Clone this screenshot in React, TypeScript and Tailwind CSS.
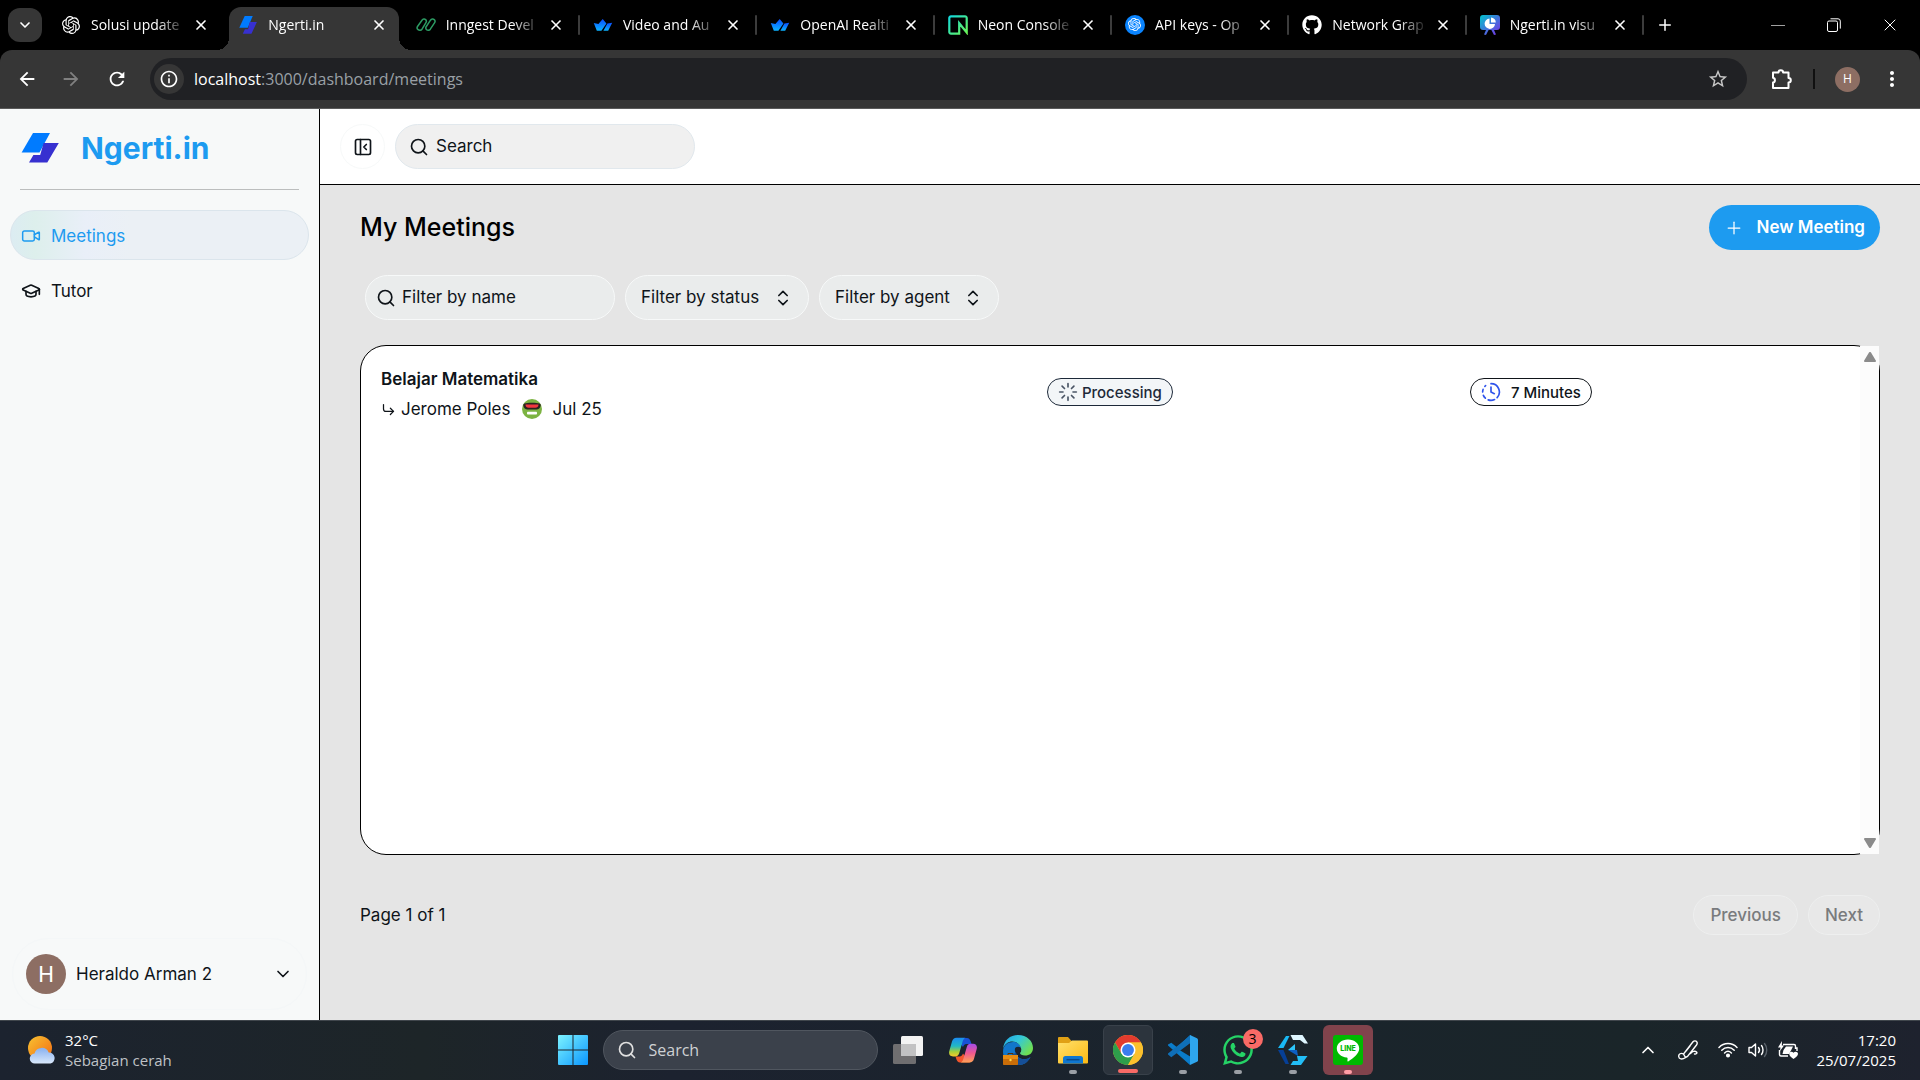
import type { ReactNode } from "react";
import {
  ChevronDown,
  ChevronUp,
  ChevronsUpDown,
  ClockFading,
  CornerDownRight,
  GraduationCap,
  Loader,
  PanelLeftClose,
  Plus,
  Search,
  Video,
  X,
} from "lucide-react";
import { FaGithub, FaWhatsapp } from "react-icons/fa";
import { MdArrowBack, MdArrowForward, MdInfoOutline, MdMoreVert, MdRefresh, MdStarBorder } from "react-icons/md";
import { SiOpenai } from "react-icons/si";

function Logo({ className }: { className?: string }) {
  return (
    <svg viewBox="0 0 38 30" preserveAspectRatio="none" className={className} aria-hidden="true">
      <path d="M12 0h17L18.5 19.5H.6z" fill="#007bff" />
      <path d="M22.6 10h15.2L26.3 29.4H8l4.4-7.4h6.8z" fill="#3730d0" />
    </svg>
  );
}

function InngestIcon() {
  return (
    <svg viewBox="0 0 20 16" className="h-4 w-5" fill="none" stroke="#2c9b63" strokeWidth="1.5" strokeLinecap="round" strokeLinejoin="round" aria-hidden="true">
      <path d="M1.5 9.5 6 3.2c1-1.4 2.6-1.5 3.6-.6s1 2.1.2 3.2L6 12.2c-1 1.3-2.8 1.4-3.9.5S.7 10.7 1.5 9.5z" />
      <path d="m10.3 9.5 4.2-6.3c1-1.4 2.7-1.5 3.7-.6s1.1 2.1.3 3.2l-4.2 6.4c-.9 1.3-2.7 1.4-3.7.5s-1.1-2-.3-3.2z" />
    </svg>
  );
}

function StreamIcon() {
  return (
    <svg viewBox="0 0 20 13" className="h-3 w-5" aria-hidden="true">
      <defs>
        <linearGradient id="stream" x1="0" x2="0" y1="0" y2="1">
          <stop stopColor="#0b4dff" />
          <stop offset="1" stopColor="#0bb4ff" />
        </linearGradient>
      </defs>
      <path d="M0 4.2 5 5.5 9.7 0l4 5-5.4 7.8h-5z" fill="url(#stream)" />
      <path d="m14.8 5 5.2-.9-4.4 8.7h-5.2z" fill="url(#stream)" />
    </svg>
  );
}

function NeonIcon() {
  return (
    <svg viewBox="0 0 20 20" className="size-5" aria-hidden="true">
      <defs>
        <linearGradient id="neon" x1="0" x2="1" y1="0" y2="1">
          <stop stopColor="#12d8dc" />
          <stop offset="1" stopColor="#6cf556" />
        </linearGradient>
      </defs>
      <path d="M9 18.7H3A1.7 1.7 0 0 1 1.300 17V3A1.700 1.700 0 0 1 3 1.300h14A1.700 1.700 0 0 1 18.700 3v14.500l-7.500-9.300v10.500z" fill="none" stroke="url(#neon)" strokeWidth="2.2" />
    </svg>
  );
}

function ApiIcon() {
  return (
    <span className="flex size-5 items-center justify-center rounded-full bg-[#0a84ff] text-white">
      <SiOpenai size={13} />
    </span>
  );
}

function BoardIcon() {
  return (
    <svg viewBox="0 0 20 20" className="size-5" aria-hidden="true">
      <defs>
        <linearGradient id="board" x1="0" x2="1" y1="0" y2="1">
          <stop stopColor="#00c4cc" />
          <stop offset="1" stopColor="#7d2ae8" />
        </linearGradient>
      </defs>
      <path d="M3 0h14a3 3 0 0 1 3 3v9a3 3 0 0 1-3 3h-3l2 4.500-2 .5-2.600-5H8.600L6 20l-2-.5L6 15H3a3 3 0 0 1-3-3V3a3 3 0 0 1 3-3z" fill="url(#board)" />
      <path d="M9.500 3.500V9H15a5.200 5.200 0 1 1-5.500-5.500z" fill="#fff" />
      <path d="M11 2.500A5 5 0 0 1 15.800 7.500H11z" fill="#fff" />
    </svg>
  );
}

type Tab = { title: string; icon: ReactNode; active?: boolean; divider?: boolean };

const tabs: Tab[] = [
  { title: "Solusi update", icon: <SiOpenai size={18} /> },
  { title: "Ngerti.in", icon: <Logo className="size-[18px]" />, active: true },
  { title: "Inngest Devel", icon: <InngestIcon />, divider: true },
  { title: "Video and Au", icon: <StreamIcon />, divider: true },
  { title: "OpenAI Realti", icon: <StreamIcon />, divider: true },
  { title: "Neon Console", icon: <NeonIcon />, divider: true },
  { title: "API keys - Op", icon: <ApiIcon />, divider: true },
  { title: "Network Grap", icon: <FaGithub size={20} />, divider: true },
  { title: "Ngerti.in visu", icon: <BoardIcon />, divider: true },
];

function BrowserTab({ tab }: { tab: Tab }) {
  return (
    <div className="relative flex h-[43px] min-w-0 flex-1 items-center">
      {tab.active && (
        <div className="absolute inset-y-0 right-1 left-1 rounded-t-xl bg-[#363636]">
          <span className="absolute bottom-0 -left-3 size-3 bg-[radial-gradient(circle_at_0_0,transparent_12px,#363636_12px)]" />
          <span className="absolute -right-3 bottom-0 size-3 bg-[radial-gradient(circle_at_100%_0,transparent_12px,#363636_12px)]" />
        </div>
      )}
      <div className="relative flex min-w-0 flex-1 items-center justify-between pr-4 pb-2 pl-[11px]">
        <span className="flex min-w-0 items-center gap-2">
          <span className="flex w-6 shrink-0 justify-center">{tab.icon}</span>
          <span className="[mask-image:linear-gradient(to_right,black_66px,transparent_96px)] text-sm whitespace-nowrap">
            {tab.title}
          </span>
        </span>
        <button aria-label="Close tab">
          <X size={16} strokeWidth={2.5} />
        </button>
      </div>
      {tab.divider && <span className="absolute top-2 right-0 h-5 w-0.5 rounded bg-[#3c3c3c]" />}
    </div>
  );
}

function BrowserChrome() {
  return (
    <header className="bg-black font-['Open_Sans','Noto_Sans',sans-serif] text-white">
      <div className="flex h-[50px] items-end">
        <button aria-label="Search tabs" className="mb-2 ml-2 flex size-[34px] shrink-0 items-center justify-center rounded-xl bg-[#363636]">
          <ChevronDown size={16} strokeWidth={2.5} />
        </button>
        <div className="ml-1.5 flex min-w-0 max-w-[1596px] flex-1">
          {tabs.map((tab) => (
            <BrowserTab key={tab.title} tab={tab} />
          ))}
        </div>
        <button aria-label="New tab" className="mb-4 ml-3">
          <Plus size={18} />
        </button>
        <div className="mr-0.5 ml-auto flex items-center self-stretch text-white">
          <button aria-label="Minimize" className="flex w-14 justify-center">
            <span className="h-px w-3.5 bg-[#a0a0a0]" />
          </button>
          <button aria-label="Restore" className="flex w-14 justify-center">
            <svg viewBox="0 0 14 14" className="size-3.5" fill="none" stroke="currentColor" aria-hidden="true">
              <rect x="0.5" y="3" width="10" height="10.5" rx="1.5" />
              <path d="M3.5.8H11a2.300 2.300 0 0 1 2.300 2.300v7.500" />
            </svg>
          </button>
          <button aria-label="Close" className="flex w-14 justify-center">
            <X size={20} strokeWidth={1.2} />
          </button>
        </div>
      </div>
      <div className="flex h-[59px] items-center rounded-t-xl border-b border-[#5a5a5a] bg-[#363636] pl-4">
        <button aria-label="Back"><MdArrowBack size={22} /></button>
        <button aria-label="Forward" className="ml-[22px] text-[#808080]"><MdArrowForward size={22} /></button>
        <button aria-label="Reload" className="ml-6"><MdRefresh size={22} /></button>
        <div className="ml-[22px] flex h-[42px] min-w-0 flex-1 items-center rounded-full bg-[#202124] pr-[18px] pl-1">
          <span className="flex size-[30px] items-center justify-center rounded-full bg-[#363636]">
            <MdInfoOutline size={20} />
          </span>
          <span className="ml-2.5 flex-1 text-base">
            localhost<span className="text-[#9aa0a6]">:3000/dashboard/meetings</span>
          </span>
          <button aria-label="Bookmark" className="text-[#c7c7c7]"><MdStarBorder size={22} /></button>
        </div>
        <button aria-label="Extensions" className="ml-6">
          <svg viewBox="0 0 22 22" className="size-[22px]" fill="none" stroke="currentColor" strokeWidth="2" strokeLinejoin="round" aria-hidden="true">
            <path d="M2 4.500h5.500a2.300 2.300 0 0 1 4.600 0h5.400V10a2.300 2.300 0 0 1 0 4.600V20H2v-5.500a2.400 2.400 0 0 0 0-4.700z" />
          </svg>
        </button>
        <span className="ml-5 h-5 w-0.5 bg-[#101010]" />
        <span className="ml-5 flex size-[25px] items-center justify-center rounded-full bg-[#8d6e63] text-xs">H</span>
        <button aria-label="Menu" className="mr-4 ml-5"><MdMoreVert size={24} /></button>
      </div>
    </header>
  );
}

function Sidebar() {
  return (
    <aside className="flex w-80 shrink-0 flex-col border-r border-black bg-[#f7f9f9]">
      <a href="#home" className="flex h-20 items-center gap-[22px] pb-0.5 pl-[21px] text-[30px] leading-9 font-bold text-[#1d9bf0]">
        <Logo className="h-[30px] w-[38px]" />
        Ngerti.in
      </a>
      <hr className="mx-5 border-[#bcbebe]" />
      <nav className="mt-5 flex flex-col gap-[5px] px-2.5">
        <a href="#meetings" className="flex h-[50px] items-center gap-2.5 rounded-full border border-[#dbe5ec] bg-[linear-gradient(to_right,#dcecf2_0,#ddefec_8%,#e9eff8_25%,#ebf0f5_40%)] pt-0.5 pl-2.5 text-[#1d9bf0]">
          <Video size={20} strokeWidth={1.8} />
          Meetings
        </a>
        <a href="#tutor" className="flex h-[50px] items-center gap-2.5 rounded-full border border-transparent pt-0.5 pl-2.5">
          <GraduationCap size={20} />
          Tutor
        </a>
      </nav>
      <button className="mx-3 mt-auto mb-2.5 flex h-[72px] items-center gap-2.5 rounded-full border border-[#f4f7f8] px-[13px]">
        <span className="flex size-10 items-center justify-center rounded-full bg-[#8d6e63] font-['Roboto',sans-serif] text-[22px] text-white">H</span>
        <span>Heraldo Arman 2</span>
        <ChevronDown size={20} className="ml-auto" />
      </button>
    </aside>
  );
}

function Filter({ label }: { label: string }) {
  return (
    <div className="relative flex items-center">
      <select aria-label={label} className="h-[45px] appearance-none rounded-full border border-[#f7f9f9] bg-[#eaecec] pr-12 pl-[15px]">
        <option>{label}</option>
      </select>
      <ChevronsUpDown size={20} className="pointer-events-none absolute right-4" />
    </div>
  );
}

function AgentAvatar() {
  return (
    <svg viewBox="0 0 20 20" className="size-5" aria-hidden="true">
      <circle cx="10" cy="10" r="10" fill="#7cb342" />
      <path d="M2.500 4.500c3-.9 12-.9 15 0 1 .3 1.300 1 1.200 2-.3 2.500-2.200 4-4.200 4h-9c-2 0-3.900-1.500-4.200-4-.1-1 .2-1.700 1.200-2z" fill="#2b2320" />
      <path d="M3.500 5.500h13c0 2.200-1.500 3.200-3 3.200h-7c-1.500 0-3-1-3-3.200z" fill="#f2373f" />
      <rect x="5" y="12.800" width="10" height="2.800" rx="0.800" fill="#fff" />
    </svg>
  );
}

function MeetingsTable() {
  return (
    <div className="relative h-[510px] rounded-[26px] border border-black bg-white">
      <table className="w-full table-fixed text-left">
        <colgroup>
          <col className="w-[44%]" />
          <col className="w-[28%]" />
          <col />
        </colgroup>
        <tbody>
          <tr>
            <td className="p-5">
              <div className="flex flex-col gap-1 leading-[26px]">
                <span className="font-semibold">Belajar Matematika</span>
                <span className="flex items-center">
                  <CornerDownRight size={15} />
                  <span className="ml-[5px]">Jerome Poles</span>
                  <span className="mr-2.5 ml-3"><AgentAvatar /></span>
                  Jul 25
                </span>
              </div>
            </td>
            <td className="py-5 pl-[18px]">
              <span className="inline-flex h-7 items-center gap-1 rounded-full border border-[#1d2939] bg-[#f3f6f8] px-2.5 text-[15px] font-medium text-[#1d2939]">
                <Loader size={20} className="text-[#4a5565]" />
                Processing
              </span>
            </td>
            <td className="py-5 pl-4">
              <span className="inline-flex h-7 items-center gap-2.5 rounded-full border border-[#0f1419] px-2.5 text-[15px] font-medium">
                <ClockFading size={20} className="text-[#2f54eb]" />
                7 Minutes
              </span>
            </td>
          </tr>
        </tbody>
      </table>
      <div className="absolute inset-y-0 right-0 flex w-[19px] flex-col items-center justify-between bg-[#fcfcfc] py-1.5 text-[#8b8b8b]">
        <svg viewBox="0 0 12 10" className="h-2.5 w-3" fill="currentColor" aria-hidden="true">
          <path d="M5 .6a1.200 1.200 0 0 1 2 0l4.800 7.800a1 1 0 0 1-.9 1.600H1.100a1 1 0 0 1-.9-1.600z" />
        </svg>
        <svg viewBox="0 0 12 10" className="h-2.5 w-3 rotate-180" fill="currentColor" aria-hidden="true">
          <path d="M5 .6a1.200 1.200 0 0 1 2 0l4.800 7.800a1 1 0 0 1-.9 1.600H1.100a1 1 0 0 1-.9-1.600z" />
        </svg>
      </div>
    </div>
  );
}

function Dashboard() {
  return (
    <div className="flex flex-1 bg-[#e5e5e5] font-['Inter',sans-serif] text-[17px] leading-[27px] text-[#0f1419]">
      <Sidebar />
      <div className="flex min-w-0 flex-1 flex-col">
        <div className="flex h-[76px] items-center gap-2.5 border-b border-black bg-white px-5">
          <button aria-label="Toggle sidebar" className="flex size-[45px] items-center justify-center rounded-full border border-[#f7f9f9]">
            <PanelLeftClose size={20} />
          </button>
          <label className="flex h-[45px] w-[300px] items-center gap-[7px] rounded-full border border-[#e1e8ed] bg-[#f0f0f0] px-[13px]">
            <Search size={20} />
            <input type="text" aria-label="Search" placeholder="Search" className="min-w-0 flex-1 outline-none placeholder:text-[#0f1419]" />
          </label>
        </div>
        <main className="flex flex-col px-10 pt-5">
          <div className="flex items-center justify-between">
            <h1 className="text-[25px] font-medium text-black">My Meetings</h1>
            <button className="flex h-[45px] items-center gap-3 rounded-full bg-[#1d9bf0] px-[15px] font-semibold text-white">
              <Plus size={20} strokeWidth={1.5} />
              New Meeting
            </button>
          </div>
          <div className="mt-[25px] flex gap-2.5 pl-[5px]">
            <label className="flex h-[45px] w-[250px] items-center gap-1.5 rounded-full border border-[#f7f9f9] bg-[#eaecec] px-2.5">
              <Search size={20} className="shrink-0" />
              <input type="text" aria-label="Filter by name" placeholder="Filter by name" className="min-w-0 flex-1 outline-none placeholder:text-[#0f1419]" />
            </label>
            <Filter label="Filter by status" />
            <Filter label="Filter by agent" />
          </div>
          <div className="mt-[25px]">
            <MeetingsTable />
          </div>
          <div className="mt-10 flex items-center justify-between">
            <span>Page 1 of 1</span>
            <div className="flex gap-2.5 font-medium text-[#797b7d]">
              <button disabled className="h-10 rounded-full border border-[#eeefef] bg-[#e8e8e8] px-4">Previous</button>
              <button disabled className="h-10 rounded-full border border-[#eeefef] bg-[#e8e8e8] px-4">Next</button>
            </div>
          </div>
        </main>
      </div>
    </div>
  );
}

function WeatherIcon() {
  return (
    <svg viewBox="0 0 28 28" className="size-7" aria-hidden="true">
      <defs>
        <linearGradient id="sun" x1="0" x2="1" y1="0" y2="1">
          <stop stopColor="#f8c332" />
          <stop offset="1" stopColor="#f26a12" />
        </linearGradient>
        <linearGradient id="cloud" x1="0" x2="0" y1="0" y2="1">
          <stop stopColor="#87b0ef" />
          <stop offset="1" stopColor="#d9e8fb" />
        </linearGradient>
      </defs>
      <circle cx="12" cy="12" r="12" fill="url(#sun)" />
      <path d="M7 27.500a5 5 0 0 1-.5-10 7.500 7.500 0 0 1 14.200-1 5.600 5.600 0 0 1 1.800 11z" fill="url(#cloud)" />
    </svg>
  );
}

function StartIcon() {
  return (
    <svg viewBox="0 0 30 30" className="size-[30px]" aria-hidden="true">
      <defs>
        <linearGradient id="start" x1="0" x2="30" y1="0" y2="30" gradientUnits="userSpaceOnUse">
          <stop stopColor="#7df3ff" />
          <stop offset="1" stopColor="#0a96ff" />
        </linearGradient>
      </defs>
      <path d="M1 0h13.500v14.500H0V1a1 1 0 0 1 1-1zM15.500 0H29a1 1 0 0 1 1 1v13.500H15.500zM0 15.500h14.500V30H1a1 1 0 0 1-1-1zM15.500 15.500H30V29a1 1 0 0 1-1 1H15.500z" fill="url(#start)" />
    </svg>
  );
}

function TaskViewIcon() {
  return (
    <svg viewBox="0 0 30 30" className="size-[30px]" aria-hidden="true">
      <rect y="9" width="23" height="20" rx="1.5" fill="#6f6e70" />
      <rect x="8" y="1" width="22" height="20" rx="1.5" fill="#f3f3f3" />
      <path d="M8 9h15v12H9.500A1.500 1.500 0 0 1 8 19.500z" fill="#c2c2c3" />
    </svg>
  );
}

function CopilotIcon() {
  return (
    <svg viewBox="0 0 28 26" className="h-[26px] w-7" aria-hidden="true">
      <defs>
        <linearGradient id="copilotLeft" x1="0" x2="0" y1="0" y2="1">
          <stop stopColor="#1b8bf2" />
          <stop offset="0.45" stopColor="#22b8c4" />
          <stop offset="0.75" stopColor="#a5cf3a" />
          <stop offset="1" stopColor="#f7c72b" />
        </linearGradient>
        <linearGradient id="copilotRight" x1="0" x2="0" y1="0" y2="1">
          <stop stopColor="#a44ce8" />
          <stop offset="0.5" stopColor="#f0588f" />
          <stop offset="1" stopColor="#ffa257" />
        </linearGradient>
      </defs>
      <path d="M7 1h11c2 0 3 1.500 3.500 3l1 3h-5c-2 0-3 1.500-3.500 3z" fill="#1852d6" />
      <path d="M21 25.500H11c-2 0-3-1.500-3.500-3l-1-3h4c2 0 3-1.500 3.500-3z" fill="#f2552c" />
      <path d="M7.500.7h9c-1.500.6-2.300 2-2.800 3.600l-3.500 11.900c-.6 2-1.800 3.200-3.900 3.200H4c-3.200 0-4.500-2.200-3.700-5.300L3 4.500C3.700 2 5.200.7 7.500.7z" fill="url(#copilotLeft)" />
      <path d="M20.500 25.500h-9c1.500-.6 2.300-2 2.800-3.600l3.500-11.900c.6-2 1.800-3.200 3.900-3.200H24c3.200 0 4.500 2.200 3.700 5.300L25 21.700c-.7 2.500-2.200 3.800-4.500 3.800z" fill="url(#copilotRight)" />
    </svg>
  );
}

function EdgeIcon() {
  return (
    <svg viewBox="0 0 30 30" className="size-[30px]" aria-hidden="true">
      <defs>
        <linearGradient id="edgeTop" x1="0" x2="1" y1="0" y2="0.6">
          <stop stopColor="#1fa4e8" />
          <stop offset="0.5" stopColor="#34c8d8" />
          <stop offset="1" stopColor="#6fdf52" />
        </linearGradient>
      </defs>
      <path d="M0 17C0 10 5 7 10 7c5 0 8 3 8 6-2-1-5 0-5 4 0 5 5 8 10 7 2 0 3-1 4.500-2C25 27 21 30 15.500 30 7 30 0 25 0 17z" fill="#1276ca" />
      <path d="M13 17c0 5 5 8 10 7 2 0 3-1 4.500-2C25 27 21 30 15.500 30 9 28 8 21 13 17z" fill="#164f97" />
      <path d="M0 14C1 5 7 0 15 0c9 0 15 6 15 13 0 5-3.500 7.500-8 7.500-3 0-5-1-5-2.500 0-1 1.200-1.500 1.200-4C18 10 14 6.500 9.500 6.500 5 6.500 1.500 9 0 14z" fill="url(#edgeTop)" />
      <circle cx="15" cy="15" r="3.200" fill="#1b2430" />
      <rect y="20" width="15" height="10" rx="0.8" fill="#c96d08" />
      <path d="M0 20h15v4H0z" fill="#e88d13" />
      <path d="M5 20v-1.500h5V20" stroke="#553008" fill="none" />
      <circle cx="7.5" cy="25" r="1.2" fill="#ffd64a" />
    </svg>
  );
}

function FolderIcon() {
  return (
    <svg viewBox="0 0 30 30" className="size-[30px]" aria-hidden="true">
      <defs>
        <linearGradient id="folder" x1="0" x2="1" y1="0" y2="1">
          <stop stopColor="#ffe06c" />
          <stop offset="1" stopColor="#fcb913" />
        </linearGradient>
      </defs>
      <path d="M0 3a1 1 0 0 1 1-1h9l3.500 4H20v8H0z" fill="#e0a015" />
      <path d="M0 8h11l3-2.500h15a1 1 0 0 1 1 1V27.500a1 1 0 0 1-1 1H1a1 1 0 0 1-1-1z" fill="url(#folder)" />
      <path d="M5 28.500v-5a2.500 2.500 0 0 1 2.500-2.500h15a2.500 2.500 0 0 1 2.500 2.500v5z" fill="#0f77d0" />
      <path d="M8.500 24.700h13" stroke="#0a4a8c" strokeWidth="1.5" />
    </svg>
  );
}

function ChromeIcon() {
  return (
    <svg viewBox="0 0 48 48" className="size-[30px]" aria-hidden="true">
      <circle cx="24" cy="24" r="24" fill="#fbc02d" />
      <path d="M24 12h20.800A24 24 0 0 0 3.200 12l10.400 18z" fill="#e33b2e" />
      <path d="M3.200 12A24 24 0 0 0 24 48l10.400-18L24 34l-10.400-4z" fill="#2e9e4b" />
      <path d="M24 48A24 24 0 0 0 44.800 12H24l10.400 18z" fill="#fbc02d" />
      <circle cx="24" cy="24" r="12" fill="#fff" />
      <circle cx="24" cy="24" r="9.5" fill="#3b7ded" />
    </svg>
  );
}

function CodeIcon() {
  return (
    <svg viewBox="0 0 30 30" className="size-[30px]" aria-hidden="true">
      <path d="M22 0 9 12.200 3.300 7.800 0 9.500v1L22 30l1-8-11.500-7L23 7z" fill="#0a7ccb" />
      <path d="m0 19.500 3.300 2.700L23 7.500V0L0 18.500z" fill="#0f6fb8" />
      <path d="m22 0 7 3.200a1.800 1.800 0 0 1 1 1.600v20.400a1.800 1.800 0 0 1-1 1.600L22 30z" fill="#2ea6ee" />
    </svg>
  );
}

function EditorIcon() {
  return (
    <svg viewBox="0 0 30 30" className="size-[30px]" aria-hidden="true">
      <path d="M8 1h3.500L5.500 13H0z" fill="#19b8f4" />
      <path d="M12.500 0h12L30 8.500h-3.500L22 5h-7z" fill="#dff6ff" />
      <path d="M0 15h5.500l5.500 14H7.500z" fill="#063f96" />
      <path d="m17 9-7 6h7z" fill="#2cc5fa" />
      <path d="M10 15h9l1 6z" fill="#0d5fc4" />
      <path d="M19 21h10.500L23 30H12.500l2.500-4h5z" fill="#22bdf6" />
    </svg>
  );
}

function LineIcon() {
  return (
    <svg viewBox="0 0 30 30" className="size-[30px]" aria-hidden="true">
      <rect width="30" height="30" rx="3" fill="#00b900" />
      <path d="M15 4.500c6.400 0 11.200 4 11.200 9 0 5.500-6 9.500-10.700 12.800-1 .6-1.200-.4-1-1.600.2-1 .2-2-.7-2.100C8 22 3.800 18.200 3.800 13.500c0-5 4.800-9 11.200-9z" fill="#fff" />
      <text x="15" y="16" textAnchor="middle" fontSize="7" fontWeight="800" fill="#00b900" fontFamily="Inter, sans-serif">LINE</text>
    </svg>
  );
}

type AppEntry = { name: string; icon: ReactNode; className?: string; marker?: string; badge?: string };

const apps: AppEntry[] = [
  { name: "Task view", icon: <TaskViewIcon /> },
  { name: "Copilot", icon: <CopilotIcon /> },
  { name: "Edge", icon: <EdgeIcon /> },
  { name: "Files", icon: <FolderIcon />, marker: "w-2 bg-[#9a9fa5]" },
  { name: "Chrome", icon: <ChromeIcon />, className: "border border-[#39414a] bg-[#2c343d]", marker: "w-5 bg-[#f96a66]" },
  { name: "Code", icon: <CodeIcon />, marker: "w-2 bg-[#9a9fa5]" },
  { name: "WhatsApp", icon: <FaWhatsapp size={34} color="#25d366" />, marker: "w-2 bg-[#9a9fa5]", badge: "3" },
  { name: "Editor", icon: <EditorIcon />, marker: "w-2 bg-[#9a9fa5]" },
  { name: "Line", icon: <LineIcon />, className: "bg-[#81434c]", marker: "w-2 bg-[#ff9ea6]" },
];

function Taskbar() {
  return (
    <footer className="grid h-[60px] grid-cols-[1fr_auto_1fr] items-center border-t border-[#40464c] bg-[linear-gradient(to_right,#1c232f,#1d2528_22%,#1c222f_35%,#1a242c_65%,#1a2529_85%,#1e222e)] pb-px font-['Open_Sans','Noto_Sans',sans-serif] text-[15px] leading-5 text-white">
      <button className="flex items-center gap-[9px] pl-7 text-left">
        <WeatherIcon />
        <span>
          32°C
          <br />
          <span className="text-[#bfc2c6]">Sebagian cerah</span>
        </span>
      </button>
      <div className="flex items-center gap-[5px]">
        <button aria-label="Start" className="flex size-[50px] items-center justify-center">
          <StartIcon />
        </button>
        <label className="flex h-10 w-[275px] items-center gap-3 rounded-full border border-[#50565f] bg-[#3b414b] px-[13px] text-base">
          <Search size={20} className="shrink-0 text-[#e0e0e0]" />
          <input type="text" aria-label="Search Windows" placeholder="Search" className="min-w-0 flex-1 outline-none placeholder:text-[#cfd1d4]" />
        </label>
        {apps.map((app) => (
          <button key={app.name} aria-label={app.name} className={`relative flex size-[50px] items-center justify-center rounded-md ${app.className ?? ""}`}>
            {app.icon}
            {app.badge && (
              <span className="absolute top-1 right-0 flex size-5 items-center justify-center rounded-full bg-[#f96a66] text-sm text-black">{app.badge}</span>
            )}
            {app.marker && <span className={`absolute bottom-px h-1 rounded-full ${app.marker}`} />}
          </button>
        ))}
      </div>
      <div className="flex items-center justify-end pr-6">
        <ChevronUp size={20} />
        <svg viewBox="0 0 20 20" className="ml-5 size-5" fill="none" stroke="currentColor" strokeWidth="1.4" strokeLinecap="round" aria-hidden="true">
          <path d="M7.500 17.500 5.500 14 15 1.800c1-1.200 3-1.200 3.800 0s.4 2.200-.3 3.200L9.500 16.500zM12 6 8 11M5.500 14C3 12.500.500 14 .7 16.500S4 20 7.500 17.500M12.500 13.500c1.500-2 4.500-3 6-1.500 1 1-.5 2.500-2 2" />
        </svg>
        <svg viewBox="0 0 20 16" className="ml-5 h-4 w-5" fill="none" stroke="currentColor" strokeWidth="1.5" strokeLinecap="round" aria-hidden="true">
          <path d="M1 5.500c5-5.300 13-5.300 18 0M3.800 8.300c3.500-3.600 8.900-3.600 12.400 0M6.600 11c2-2 4.800-2 6.800 0" />
          <circle cx="10" cy="13.5" r="1.3" fill="currentColor" />
        </svg>
        <svg viewBox="0 0 20 16" className="ml-2.5 h-4 w-5" fill="none" stroke="currentColor" strokeWidth="1.4" strokeLinecap="round" strokeLinejoin="round" aria-hidden="true">
          <path d="M1 5.500h2.500L7.500 2v12l-4-3.500H1zM10.500 5.500c1.200 1.500 1.200 3.500 0 5M13.500 3.500c2 2.500 2 6.500 0 9" />
          <path d="M16.500 1.500c3 3.500 3 9.500 0 13" stroke="#59616a" />
        </svg>
        <svg viewBox="0 0 20 18" className="ml-2.5 h-[18px] w-5" aria-hidden="true">
          <path d="M5 3.500h11a1.500 1.500 0 0 1 1.500 1.500v3M1.500 9v4.500A1.500 1.500 0 0 0 3 15h7M17.500 7h1.500v3" fill="none" stroke="currentColor" strokeWidth="1.4" />
          <path d="M4 0 0 6.500h2.500L2 10l4-5.500H3.800zM8 5.500h7L13 9.500l-2 3.500H4.500l1-4z" fill="currentColor" />
          <path d="M15.500 18c-3-2.300-4.300-3.500-4.300-5.200 0-2.300 3-3 4.300-1 1.300-2 4.500-1.300 4.500 1 0 1.700-1.500 2.900-4.500 5.200z" fill="currentColor" />
        </svg>
        <span className="ml-[18px] text-right">
          17:20
          <br />
          25/07/2025
        </span>
      </div>
    </footer>
  );
}

export default function App() {
  return (
    <div className="flex min-h-screen flex-col">
      <BrowserChrome />
      <Dashboard />
      <Taskbar />
    </div>
  );
}
